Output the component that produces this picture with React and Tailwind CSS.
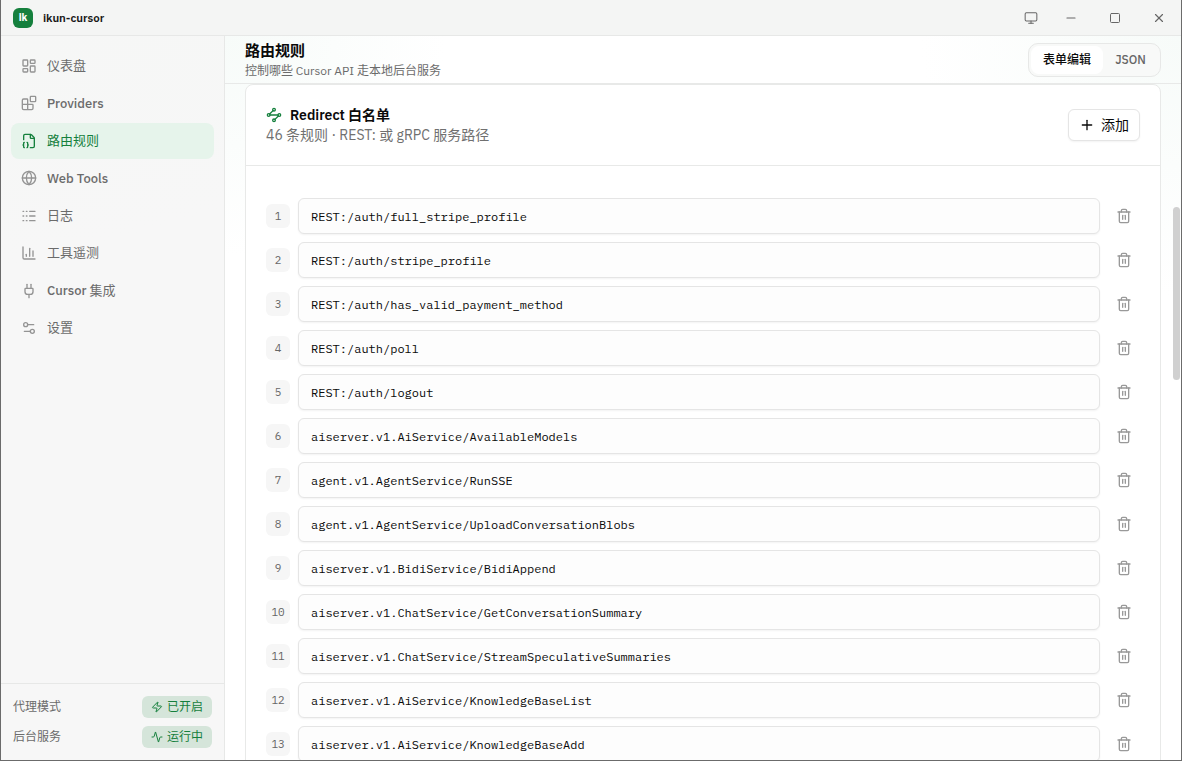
import React from "react";
import {
  Activity,
  Blocks,
  ChartColumn,
  FileJson2,
  Globe,
  LayoutDashboard,
  Logs,
  Minus,
  Monitor,
  Plug,
  Plus,
  Settings2,
  Square,
  Trash2,
  X,
  Zap,
} from "lucide-react";

const navItems = [
  { label: "仪表盘", icon: LayoutDashboard },
  { label: "Providers", icon: Blocks, latin: true },
  { label: "路由规则", icon: FileJson2, active: true },
  { label: "Web Tools", icon: Globe, latin: true },
  { label: "日志", icon: Logs },
  { label: "工具遥测", icon: ChartColumn },
  { label: "Cursor 集成", icon: Plug, latin: true },
  { label: "设置", icon: Settings2 },
];

const rules = [
  "REST:/auth/full_stripe_profile",
  "REST:/auth/stripe_profile",
  "REST:/auth/has_valid_payment_method",
  "REST:/auth/poll",
  "REST:/auth/logout",
  "aiserver.v1.AiService/AvailableModels",
  "agent.v1.AgentService/RunSSE",
  "agent.v1.AgentService/UploadConversationBlobs",
  "aiserver.v1.BidiService/BidiAppend",
  "aiserver.v1.ChatService/GetConversationSummary",
  "aiserver.v1.ChatService/StreamSpeculativeSummaries",
  "aiserver.v1.AiService/KnowledgeBaseList",
  "aiserver.v1.AiService/KnowledgeBaseAdd",
];

const RouteIcon = () => (
  <svg
    width="16"
    height="16"
    viewBox="0 0 24 24"
    fill="none"
    stroke="currentColor"
    strokeWidth="2"
    strokeLinecap="round"
    strokeLinejoin="round"
    className="text-[#15803d]"
  >
    <path d="m10.586 5.414-5.172 5.172" />
    <path d="m18.586 13.414-5.172 5.172" />
    <path d="M6 12h12" />
    <circle cx="12" cy="20" r="2" />
    <circle cx="12" cy="4" r="2" />
    <circle cx="20" cy="12" r="2" />
    <circle cx="4" cy="12" r="2" />
  </svg>
);

const TitleBar = () => (
  <header className="flex h-9 shrink-0 items-center border-b border-[#e7e8e7] bg-[#f4f5f4] pl-3">
    <div className="flex size-5 items-center justify-center rounded-[6px] bg-[#15803d] text-[10px] font-bold text-white">
      ik
    </div>
    <span className="ml-2.5 text-[11.5px] font-semibold tracking-[-0.05px] text-[#171717]">ikun-cursor</span>
    <div className="ml-auto flex text-[#666]">
      <button className="flex h-9 w-9 items-center justify-center">
        <Monitor size={14} strokeWidth={1.75} />
      </button>
      <button className="flex h-9 w-11 items-center justify-center">
        <Minus size={14} strokeWidth={1.75} />
      </button>
      <button className="flex h-9 w-11 items-center justify-center">
        <Square size={12} strokeWidth={2} />
      </button>
      <button className="flex h-9 w-11 items-center justify-center">
        <X size={14} strokeWidth={2} />
      </button>
    </div>
  </header>
);

const NavItem = ({ label, icon: Icon, active, latin }) => (
  <a
    className={
      active
        ? "flex h-9 items-center gap-2.5 rounded-lg bg-[#e6f4eb] px-2.5 text-[13px] text-[#15803d]"
        : "flex h-9 items-center gap-2.5 rounded-lg px-2.5 text-[13px] text-[#6b6b6b]"
    }
  >
    <Icon size={16} strokeWidth={2} className={active ? "" : "opacity-70"} />
    <span className={latin ? "pt-px font-medium" : "font-normal"}>
      {label === "Cursor 集成" ? (
        <>
          Cursor <span className="font-normal">集成</span>
        </>
      ) : (
        label
      )}
    </span>
  </a>
);

const StatusRow = ({ label, status, icon: Icon }) => (
  <div className="flex items-center justify-between text-xs text-[#6b6b6b]">
    <span>{label}</span>
    <span className="flex h-[22px] w-[70px] items-center justify-center gap-1 rounded-md bg-[#d5e5da] text-[#15803d]">
      <Icon size={12} strokeWidth={2} />
      {status}
    </span>
  </div>
);

const Sidebar = () => (
  <aside className="flex w-[224px] shrink-0 flex-col border-r border-[#e7e8e7] bg-[linear-gradient(165deg,#f6f7f6_0%,#f7f7f7_30%)]">
    <nav className="flex flex-1 flex-col gap-[1.5px] px-2.5 pt-[11.5px]">
      {navItems.map((item) => (
        <NavItem key={item.label} {...item} />
      ))}
    </nav>
    <div className="flex flex-col gap-2 border-t border-[#e7e8e7] px-3 pt-3 pb-3">
      <StatusRow label="代理模式" status="已开启" icon={Zap} />
      <StatusRow label="后台服务" status="运行中" icon={Activity} />
    </div>
  </aside>
);

const PageHeader = () => (
  <div className="flex h-12 shrink-0 items-center justify-between border-b border-[#e8e9e8] pr-5 pl-5">
    <div className="pt-0.5">
      <h1 className="text-[15px] leading-5 font-bold text-[#0a0a0a]">路由规则</h1>
      <p className="text-xs leading-5 text-[#6b6b6b]">控制哪些 Cursor API 走本地后台服务</p>
    </div>
    <div className="flex h-[34px] w-[133px] items-center rounded-[10px] border border-[#e7e8e7] bg-[#f8f9f8] p-0.5 text-xs font-medium">
      <button className="h-7 w-[72px] rounded-lg bg-white text-[#0a0a0a]">表单编辑</button>
      <button className="h-7 flex-1 pt-px text-xs text-[#666]">JSON</button>
    </div>
  </div>
);

const RuleRow = ({ index, value }) => (
  <div className="flex items-center gap-2">
    <span className="flex size-6 shrink-0 items-center justify-center rounded-md bg-[#f6f6f6] font-['IBM_Plex_Mono','Liberation_Mono',monospace] text-[11px] text-[#666]">
      {index}
    </span>
    <div className="flex h-9 flex-1 items-center rounded-md border border-[#e5e5e5] bg-[#fdfdfd] px-3 pt-0.5 font-['IBM_Plex_Mono','Liberation_Mono',monospace] text-xs text-[#0a0a0a] shadow-[0_1px_2px_rgba(0,0,0,0.05)]">
      {value}
    </div>
    <button className="flex size-8 items-center justify-center text-[#999]">
      <Trash2 size={16} strokeWidth={2} />
    </button>
  </div>
);

const App = () => {
  return (
    <div className="flex h-[761px] w-[1182px] flex-col overflow-hidden border-x border-b border-[#6b6b6b] bg-white font-['IBM_Plex_Sans','Inter','Noto_Sans_CJK_SC',sans-serif]">
      <TitleBar />
      <div className="flex min-h-0 flex-1">
        <Sidebar />
        <main className="relative flex min-w-0 flex-1 flex-col bg-[radial-gradient(circle_at_0_0,#f7fbf9_0,transparent_220px),radial-gradient(circle_at_100%_0,#f7fbf9_0,transparent_260px)]">
          <PageHeader />
          <div className="min-h-0 flex-1 overflow-hidden pr-5 pl-5">
            <section className="h-[800px] rounded-t-lg border border-[#e8e9e8] bg-white">
              <div className="flex h-[81px] items-center justify-between border-b border-[#e8e9e8] px-5">
                <div>
                  <h2 className="flex items-center gap-2 text-sm leading-5 font-semibold text-[#0a0a0a]">
                    <RouteIcon />
                    Redirect 白名单
                  </h2>
                  <p className="text-sm leading-5 text-[#707070]">46 条规则 · REST: 或 gRPC 服务路径</p>
                </div>
                <button className="flex h-8 w-[72px] items-center justify-center gap-1.5 rounded-md border border-[#e5e5e5] bg-white text-sm text-[#0a0a0a] shadow-[0_1px_2px_rgba(0,0,0,0.05)]">
                  <Plus size={16} />
                  添加
                </button>
              </div>
              <div className="flex flex-col gap-2 px-5 pt-8">
                {rules.map((rule, i) => (
                  <RuleRow key={rule} index={i + 1} value={rule} />
                ))}
              </div>
            </section>
          </div>
          <div className="absolute top-[171px] right-px h-[173px] w-[7px] rounded-full bg-[#d0d0d0]" />
        </main>
      </div>
    </div>
  );
};

export default App;
